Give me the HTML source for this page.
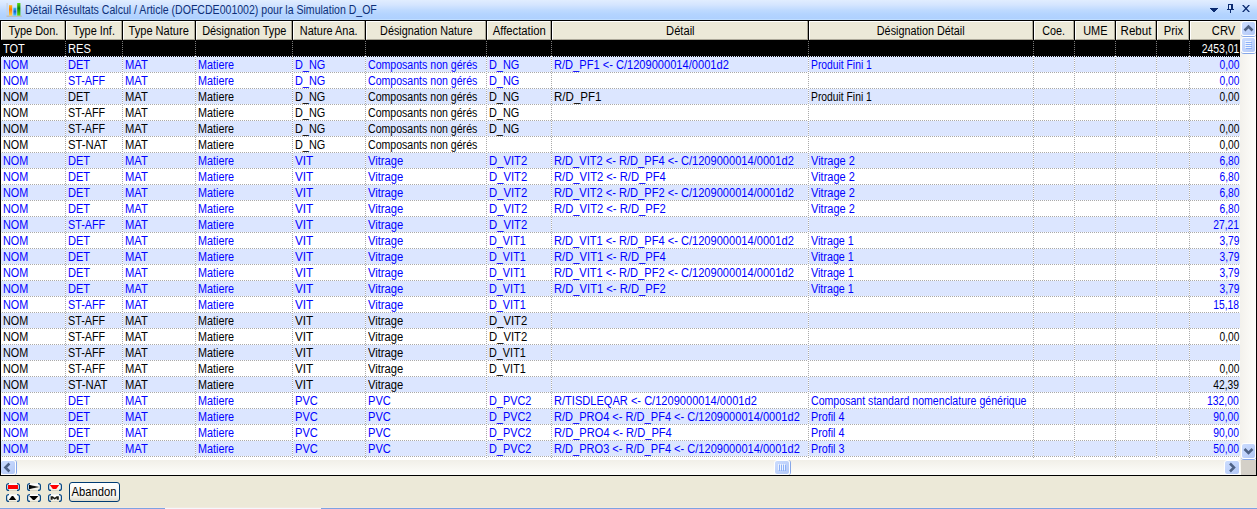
<!DOCTYPE html>
<html><head><meta charset="utf-8"><title>Détail Résultats Calcul</title>
<style>
html,body{margin:0;padding:0;}
body{width:1257px;height:509px;overflow:hidden;background:#ECE9D8;position:relative;font-family:"Liberation Sans",sans-serif;font-size:12px;}
#tb{position:absolute;left:0;top:0;width:1257px;height:20px;background:linear-gradient(#E1EDFF 0%,#D4E5FF 25%,#BFDAFF 50%,#B4D4FF 70%,#AED0FF 100%);}
#tt{position:absolute;left:25px;top:4px;color:#0D2F78;font-size:12px;line-height:13px;white-space:nowrap;transform-origin:0 0;}
#grid{position:absolute;left:0;top:20px;width:1257px;height:456px;background:#000;}
#gin{position:absolute;left:1px;top:1px;width:1255px;height:454px;background:#fff;overflow:hidden;}
.h{position:absolute;top:0;height:18px;background:#ECE9D8;border-top:1px solid #fff;border-left:1px solid #fff;border-bottom:1px solid #ACA899;box-sizing:border-box;text-align:center;line-height:19px;white-space:nowrap;color:#000;height:19px;overflow:hidden;}
.hs{position:absolute;top:0;width:1px;height:20px;background:#000;}
.hg{position:absolute;top:0;width:1px;height:19px;background:#ACA899;}
.r{position:absolute;left:0;width:1239px;height:15px;}
.r.t{background:#DCE6FF;}
.r.w0{background:#000;}
.c{position:absolute;top:1px;height:16px;line-height:15px;white-space:nowrap;overflow:hidden;padding-left:2px;box-sizing:border-box;}
.c.n{text-align:right;padding-left:0;padding-right:2px;}
.s{display:inline-block;white-space:pre;}
.b{color:#0000FF}.k{color:#000}.w{color:#fff}
.hl{position:absolute;left:0;width:1239px;height:1px;background-image:linear-gradient(90deg,#fff 50%,#A9A9A9 50%);background-size:2px 1px;}
.hl.k0{background-image:linear-gradient(90deg,#000 50%,#DCE6FF 50%);}
.vl{position:absolute;top:20px;width:1px;height:417px;background-image:linear-gradient(#A9A9A9 50%,#fff 50%);background-size:1px 2px;}
.vk{position:absolute;top:20px;width:1px;height:15px;background-image:linear-gradient(#7A7A7A 50%,#000 50%);background-size:1px 2px;}
</style></head><body>

<div id="tb">
<svg style="position:absolute;left:5px;top:2px" width="18" height="16" viewBox="0 0 18 16">
<defs>
<linearGradient id="go" x1="0" y1="0" x2="0" y2="1"><stop offset="0" stop-color="#FFB818"/><stop offset=".4" stop-color="#FF7E00"/><stop offset="1" stop-color="#FFD448"/></linearGradient>
<linearGradient id="gb" x1="0" y1="0" x2="0" y2="1"><stop offset="0" stop-color="#35C5F5"/><stop offset=".5" stop-color="#1560D0"/><stop offset="1" stop-color="#40D0FF"/></linearGradient>
<linearGradient id="gg" x1="0" y1="0" x2="0" y2="1"><stop offset="0" stop-color="#5CE010"/><stop offset=".42" stop-color="#0A860A"/><stop offset="1" stop-color="#62DA00"/></linearGradient>
</defs>
<rect x="1.5" y="1" width="1.2" height="13.5" fill="#CDD2DC"/>
<rect x="1.5" y="13.6" width="15.3" height="1.2" fill="#BDBAB4"/>
<rect x="4" y="3.2" width="3.2" height="10.4" fill="url(#go)"/>
<rect x="8.4" y="5.7" width="2.9" height="7.9" fill="url(#gb)"/>
<rect x="12.2" y="1" width="3.2" height="12.6" fill="url(#gg)"/>
</svg>
<div id="tt"><span class="s" style="transform:scaleX(0.8792);transform-origin:0 50%">Détail Résultats Calcul / Article (DOFCDE001002) pour la Simulation D_OF</span></div>
<svg style="position:absolute;left:1205px;top:0" width="52" height="20" viewBox="1205 0 52 20" shape-rendering="crispEdges" fill="#0B2B70">
<rect x="1210" y="8" width="8" height="1"/><rect x="1211" y="9" width="6" height="1"/><rect x="1212" y="10" width="4" height="1"/><rect x="1213" y="11" width="2" height="1"/>
<rect x="1228" y="4" width="5" height="1"/><rect x="1228" y="5" width="1" height="4"/><rect x="1231" y="5" width="2" height="4"/><rect x="1227" y="9" width="7" height="1"/><rect x="1230" y="10" width="1" height="3"/>
<rect x="1229" y="5" width="2" height="4" fill="#D6E4FA"/>
<path d="M1242 5 h1.7 l2.3 2.5 l2.3 -2.5 h1.7 l-3.1 3.5 l3.1 3.5 h-1.7 l-2.3 -2.5 l-2.3 2.5 h-1.7 l3.1 -3.5 Z" shape-rendering="auto"/>
</svg>
<div style="position:absolute;left:0;top:19px;width:1257px;height:1px;background:#BFDDFF"></div>
</div>
<div id="grid"><div id="gin">
<div class="h" style="left:0px;width:63px"><span class="s" style="transform:scaleX(0.9104);transform-origin:50% 50%">Type Don.</span></div>
<div class="hg" style="left:63px"></div><div class="hs" style="left:64px"></div>
<div class="h" style="left:65px;width:55px"><span class="s" style="transform:scaleX(0.9081);transform-origin:50% 50%">Type Inf.</span></div>
<div class="hg" style="left:120px"></div><div class="hs" style="left:121px"></div>
<div class="h" style="left:122px;width:71px"><span class="s" style="transform:scaleX(0.9224);transform-origin:50% 50%">Type Nature</span></div>
<div class="hg" style="left:193px"></div><div class="hs" style="left:194px"></div>
<div class="h" style="left:195px;width:95px"><span class="s" style="transform:scaleX(0.9101);transform-origin:50% 50%">Désignation Type</span></div>
<div class="hg" style="left:290px"></div><div class="hs" style="left:291px"></div>
<div class="h" style="left:292px;width:71px"><span class="s" style="transform:scaleX(0.9120);transform-origin:50% 50%">Nature Ana.</span></div>
<div class="hg" style="left:363px"></div><div class="hs" style="left:364px"></div>
<div class="h" style="left:365px;width:119px"><span class="s" style="transform:scaleX(0.9004);transform-origin:50% 50%">Désignation Nature</span></div>
<div class="hg" style="left:484px"></div><div class="hs" style="left:485px"></div>
<div class="h" style="left:486px;width:63px"><span class="s" style="transform:scaleX(0.9401);transform-origin:50% 50%">Affectation</span></div>
<div class="hg" style="left:549px"></div><div class="hs" style="left:550px"></div>
<div class="h" style="left:551px;width:255px"><span class="s" style="transform:scaleX(0.9287);transform-origin:50% 50%">Détail</span></div>
<div class="hg" style="left:806px"></div><div class="hs" style="left:807px"></div>
<div class="h" style="left:808px;width:223px"><span class="s" style="transform:scaleX(0.9015);transform-origin:50% 50%">Désignation Détail</span></div>
<div class="hg" style="left:1031px"></div><div class="hs" style="left:1032px"></div>
<div class="h" style="left:1033px;width:39px"><span class="s" style="transform:scaleX(0.8991);transform-origin:50% 50%">Coe.</span></div>
<div class="hg" style="left:1072px"></div><div class="hs" style="left:1073px"></div>
<div class="h" style="left:1074px;width:39px"><span class="s" style="transform:scaleX(0.9111);transform-origin:50% 50%">UME</span></div>
<div class="hg" style="left:1113px"></div><div class="hs" style="left:1114px"></div>
<div class="h" style="left:1115px;width:39px"><span class="s" style="transform:scaleX(0.9616);transform-origin:50% 50%">Rebut</span></div>
<div class="hg" style="left:1154px"></div><div class="hs" style="left:1155px"></div>
<div class="h" style="left:1156px;width:31px"><span class="s" style="transform:scaleX(0.9336);transform-origin:50% 50%">Prix</span></div>
<div class="hg" style="left:1187px"></div><div class="hs" style="left:1188px"></div>
<div class="h" style="left:1189px;width:66px"><span class="s" style="transform:scaleX(0.9313);transform-origin:50% 50%">CRV</span></div>
<div style="position:absolute;left:0;top:19px;width:1239px;height:1px;background:#000"></div>
<div class="r w0" style="top:20px">
<div class="c w" style="left:0px;width:64px"><span class="s" style="transform:scaleX(0.9167);transform-origin:0 50%">TOT</span></div>
<div class="c w" style="left:65px;width:56px"><span class="s" style="transform:scaleX(0.9235);transform-origin:0 50%">RES</span></div>
<div class="c n w" style="left:1189px;width:51px"><span class="s" style="transform:scaleX(0.8689);transform-origin:100% 50%">2453,01</span></div>
</div>
<div class="hl k0" style="top:35px"></div>
<div class="r t" style="top:36px">
<div class="c b" style="left:0px;width:64px"><span class="s" style="transform:scaleX(0.9000);transform-origin:0 50%">NOM</span></div>
<div class="c b" style="left:65px;width:56px"><span class="s" style="transform:scaleX(0.9208);transform-origin:0 50%">DET</span></div>
<div class="c b" style="left:122px;width:72px"><span class="s" style="transform:scaleX(0.9324);transform-origin:0 50%">MAT</span></div>
<div class="c b" style="left:195px;width:96px"><span class="s" style="transform:scaleX(0.8996);transform-origin:0 50%">Matiere</span></div>
<div class="c b" style="left:292px;width:72px"><span class="s" style="transform:scaleX(0.9087);transform-origin:0 50%">D_NG</span></div>
<div class="c b" style="left:365px;width:120px"><span class="s" style="transform:scaleX(0.8809);transform-origin:0 50%">Composants non gérés</span></div>
<div class="c b" style="left:486px;width:64px"><span class="s" style="transform:scaleX(0.9087);transform-origin:0 50%">D_NG</span></div>
<div class="c b" style="left:551px;width:256px"><span class="s" style="transform:scaleX(0.9242);transform-origin:0 50%">R/D_PF1 &lt;- C/1209000014/0001d2</span></div>
<div class="c b" style="left:808px;width:224px"><span class="s" style="transform:scaleX(0.8599);transform-origin:0 50%">Produit Fini 1</span></div>
<div class="c n b" style="left:1189px;width:51px"><span class="s" style="transform:scaleX(0.8519);transform-origin:100% 50%">0,00</span></div>
</div>
<div class="hl" style="top:51px"></div>
<div class="r" style="top:52px">
<div class="c b" style="left:0px;width:64px"><span class="s" style="transform:scaleX(0.9000);transform-origin:0 50%">NOM</span></div>
<div class="c b" style="left:65px;width:56px"><span class="s" style="transform:scaleX(0.8998);transform-origin:0 50%">ST-AFF</span></div>
<div class="c b" style="left:122px;width:72px"><span class="s" style="transform:scaleX(0.9324);transform-origin:0 50%">MAT</span></div>
<div class="c b" style="left:195px;width:96px"><span class="s" style="transform:scaleX(0.8996);transform-origin:0 50%">Matiere</span></div>
<div class="c b" style="left:292px;width:72px"><span class="s" style="transform:scaleX(0.9087);transform-origin:0 50%">D_NG</span></div>
<div class="c b" style="left:365px;width:120px"><span class="s" style="transform:scaleX(0.8809);transform-origin:0 50%">Composants non gérés</span></div>
<div class="c b" style="left:486px;width:64px"><span class="s" style="transform:scaleX(0.9087);transform-origin:0 50%">D_NG</span></div>
<div class="c n b" style="left:1189px;width:51px"><span class="s" style="transform:scaleX(0.8519);transform-origin:100% 50%">0,00</span></div>
</div>
<div class="hl" style="top:67px"></div>
<div class="r t" style="top:68px">
<div class="c k" style="left:0px;width:64px"><span class="s" style="transform:scaleX(0.9000);transform-origin:0 50%">NOM</span></div>
<div class="c k" style="left:65px;width:56px"><span class="s" style="transform:scaleX(0.9208);transform-origin:0 50%">DET</span></div>
<div class="c k" style="left:122px;width:72px"><span class="s" style="transform:scaleX(0.9324);transform-origin:0 50%">MAT</span></div>
<div class="c k" style="left:195px;width:96px"><span class="s" style="transform:scaleX(0.8996);transform-origin:0 50%">Matiere</span></div>
<div class="c k" style="left:292px;width:72px"><span class="s" style="transform:scaleX(0.9087);transform-origin:0 50%">D_NG</span></div>
<div class="c k" style="left:365px;width:120px"><span class="s" style="transform:scaleX(0.8809);transform-origin:0 50%">Composants non gérés</span></div>
<div class="c k" style="left:486px;width:64px"><span class="s" style="transform:scaleX(0.9087);transform-origin:0 50%">D_NG</span></div>
<div class="c k" style="left:551px;width:256px"><span class="s" style="transform:scaleX(0.9623);transform-origin:0 50%">R/D_PF1</span></div>
<div class="c k" style="left:808px;width:224px"><span class="s" style="transform:scaleX(0.8599);transform-origin:0 50%">Produit Fini 1</span></div>
<div class="c n k" style="left:1189px;width:51px"><span class="s" style="transform:scaleX(0.8519);transform-origin:100% 50%">0,00</span></div>
</div>
<div class="hl" style="top:83px"></div>
<div class="r" style="top:84px">
<div class="c k" style="left:0px;width:64px"><span class="s" style="transform:scaleX(0.9000);transform-origin:0 50%">NOM</span></div>
<div class="c k" style="left:65px;width:56px"><span class="s" style="transform:scaleX(0.8998);transform-origin:0 50%">ST-AFF</span></div>
<div class="c k" style="left:122px;width:72px"><span class="s" style="transform:scaleX(0.9324);transform-origin:0 50%">MAT</span></div>
<div class="c k" style="left:195px;width:96px"><span class="s" style="transform:scaleX(0.8996);transform-origin:0 50%">Matiere</span></div>
<div class="c k" style="left:292px;width:72px"><span class="s" style="transform:scaleX(0.9087);transform-origin:0 50%">D_NG</span></div>
<div class="c k" style="left:365px;width:120px"><span class="s" style="transform:scaleX(0.8809);transform-origin:0 50%">Composants non gérés</span></div>
<div class="c k" style="left:486px;width:64px"><span class="s" style="transform:scaleX(0.9087);transform-origin:0 50%">D_NG</span></div>
</div>
<div class="hl" style="top:99px"></div>
<div class="r t" style="top:100px">
<div class="c k" style="left:0px;width:64px"><span class="s" style="transform:scaleX(0.9000);transform-origin:0 50%">NOM</span></div>
<div class="c k" style="left:65px;width:56px"><span class="s" style="transform:scaleX(0.8998);transform-origin:0 50%">ST-AFF</span></div>
<div class="c k" style="left:122px;width:72px"><span class="s" style="transform:scaleX(0.9324);transform-origin:0 50%">MAT</span></div>
<div class="c k" style="left:195px;width:96px"><span class="s" style="transform:scaleX(0.8996);transform-origin:0 50%">Matiere</span></div>
<div class="c k" style="left:292px;width:72px"><span class="s" style="transform:scaleX(0.9087);transform-origin:0 50%">D_NG</span></div>
<div class="c k" style="left:365px;width:120px"><span class="s" style="transform:scaleX(0.8809);transform-origin:0 50%">Composants non gérés</span></div>
<div class="c k" style="left:486px;width:64px"><span class="s" style="transform:scaleX(0.9087);transform-origin:0 50%">D_NG</span></div>
<div class="c n k" style="left:1189px;width:51px"><span class="s" style="transform:scaleX(0.8519);transform-origin:100% 50%">0,00</span></div>
</div>
<div class="hl" style="top:115px"></div>
<div class="r" style="top:116px">
<div class="c k" style="left:0px;width:64px"><span class="s" style="transform:scaleX(0.9000);transform-origin:0 50%">NOM</span></div>
<div class="c k" style="left:65px;width:56px"><span class="s" style="transform:scaleX(0.9430);transform-origin:0 50%">ST-NAT</span></div>
<div class="c k" style="left:122px;width:72px"><span class="s" style="transform:scaleX(0.9324);transform-origin:0 50%">MAT</span></div>
<div class="c k" style="left:195px;width:96px"><span class="s" style="transform:scaleX(0.8996);transform-origin:0 50%">Matiere</span></div>
<div class="c k" style="left:292px;width:72px"><span class="s" style="transform:scaleX(0.9087);transform-origin:0 50%">D_NG</span></div>
<div class="c k" style="left:365px;width:120px"><span class="s" style="transform:scaleX(0.8809);transform-origin:0 50%">Composants non gérés</span></div>
<div class="c n k" style="left:1189px;width:51px"><span class="s" style="transform:scaleX(0.8519);transform-origin:100% 50%">0,00</span></div>
</div>
<div class="hl" style="top:131px"></div>
<div class="r t" style="top:132px">
<div class="c b" style="left:0px;width:64px"><span class="s" style="transform:scaleX(0.9000);transform-origin:0 50%">NOM</span></div>
<div class="c b" style="left:65px;width:56px"><span class="s" style="transform:scaleX(0.9208);transform-origin:0 50%">DET</span></div>
<div class="c b" style="left:122px;width:72px"><span class="s" style="transform:scaleX(0.9324);transform-origin:0 50%">MAT</span></div>
<div class="c b" style="left:195px;width:96px"><span class="s" style="transform:scaleX(0.8996);transform-origin:0 50%">Matiere</span></div>
<div class="c b" style="left:292px;width:72px"><span class="s" style="transform:scaleX(0.9801);transform-origin:0 50%">VIT</span></div>
<div class="c b" style="left:365px;width:120px"><span class="s" style="transform:scaleX(0.9336);transform-origin:0 50%">Vitrage</span></div>
<div class="c b" style="left:486px;width:64px"><span class="s" style="transform:scaleX(0.9413);transform-origin:0 50%">D_VIT2</span></div>
<div class="c b" style="left:551px;width:256px"><span class="s" style="transform:scaleX(0.9241);transform-origin:0 50%">R/D_VIT2 &lt;- R/D_PF4 &lt;- C/1209000014/0001d2</span></div>
<div class="c b" style="left:808px;width:224px"><span class="s" style="transform:scaleX(0.9161);transform-origin:0 50%">Vitrage 2</span></div>
<div class="c n b" style="left:1189px;width:51px"><span class="s" style="transform:scaleX(0.8519);transform-origin:100% 50%">6,80</span></div>
</div>
<div class="hl" style="top:147px"></div>
<div class="r" style="top:148px">
<div class="c b" style="left:0px;width:64px"><span class="s" style="transform:scaleX(0.9000);transform-origin:0 50%">NOM</span></div>
<div class="c b" style="left:65px;width:56px"><span class="s" style="transform:scaleX(0.9208);transform-origin:0 50%">DET</span></div>
<div class="c b" style="left:122px;width:72px"><span class="s" style="transform:scaleX(0.9324);transform-origin:0 50%">MAT</span></div>
<div class="c b" style="left:195px;width:96px"><span class="s" style="transform:scaleX(0.8996);transform-origin:0 50%">Matiere</span></div>
<div class="c b" style="left:292px;width:72px"><span class="s" style="transform:scaleX(0.9801);transform-origin:0 50%">VIT</span></div>
<div class="c b" style="left:365px;width:120px"><span class="s" style="transform:scaleX(0.9336);transform-origin:0 50%">Vitrage</span></div>
<div class="c b" style="left:486px;width:64px"><span class="s" style="transform:scaleX(0.9413);transform-origin:0 50%">D_VIT2</span></div>
<div class="c b" style="left:551px;width:256px"><span class="s" style="transform:scaleX(0.9340);transform-origin:0 50%">R/D_VIT2 &lt;- R/D_PF4</span></div>
<div class="c b" style="left:808px;width:224px"><span class="s" style="transform:scaleX(0.9161);transform-origin:0 50%">Vitrage 2</span></div>
<div class="c n b" style="left:1189px;width:51px"><span class="s" style="transform:scaleX(0.8519);transform-origin:100% 50%">6,80</span></div>
</div>
<div class="hl" style="top:163px"></div>
<div class="r t" style="top:164px">
<div class="c b" style="left:0px;width:64px"><span class="s" style="transform:scaleX(0.9000);transform-origin:0 50%">NOM</span></div>
<div class="c b" style="left:65px;width:56px"><span class="s" style="transform:scaleX(0.9208);transform-origin:0 50%">DET</span></div>
<div class="c b" style="left:122px;width:72px"><span class="s" style="transform:scaleX(0.9324);transform-origin:0 50%">MAT</span></div>
<div class="c b" style="left:195px;width:96px"><span class="s" style="transform:scaleX(0.8996);transform-origin:0 50%">Matiere</span></div>
<div class="c b" style="left:292px;width:72px"><span class="s" style="transform:scaleX(0.9801);transform-origin:0 50%">VIT</span></div>
<div class="c b" style="left:365px;width:120px"><span class="s" style="transform:scaleX(0.9336);transform-origin:0 50%">Vitrage</span></div>
<div class="c b" style="left:486px;width:64px"><span class="s" style="transform:scaleX(0.9413);transform-origin:0 50%">D_VIT2</span></div>
<div class="c b" style="left:551px;width:256px"><span class="s" style="transform:scaleX(0.9241);transform-origin:0 50%">R/D_VIT2 &lt;- R/D_PF2 &lt;- C/1209000014/0001d2</span></div>
<div class="c b" style="left:808px;width:224px"><span class="s" style="transform:scaleX(0.9161);transform-origin:0 50%">Vitrage 2</span></div>
<div class="c n b" style="left:1189px;width:51px"><span class="s" style="transform:scaleX(0.8519);transform-origin:100% 50%">6,80</span></div>
</div>
<div class="hl" style="top:179px"></div>
<div class="r" style="top:180px">
<div class="c b" style="left:0px;width:64px"><span class="s" style="transform:scaleX(0.9000);transform-origin:0 50%">NOM</span></div>
<div class="c b" style="left:65px;width:56px"><span class="s" style="transform:scaleX(0.9208);transform-origin:0 50%">DET</span></div>
<div class="c b" style="left:122px;width:72px"><span class="s" style="transform:scaleX(0.9324);transform-origin:0 50%">MAT</span></div>
<div class="c b" style="left:195px;width:96px"><span class="s" style="transform:scaleX(0.8996);transform-origin:0 50%">Matiere</span></div>
<div class="c b" style="left:292px;width:72px"><span class="s" style="transform:scaleX(0.9801);transform-origin:0 50%">VIT</span></div>
<div class="c b" style="left:365px;width:120px"><span class="s" style="transform:scaleX(0.9336);transform-origin:0 50%">Vitrage</span></div>
<div class="c b" style="left:486px;width:64px"><span class="s" style="transform:scaleX(0.9413);transform-origin:0 50%">D_VIT2</span></div>
<div class="c b" style="left:551px;width:256px"><span class="s" style="transform:scaleX(0.9340);transform-origin:0 50%">R/D_VIT2 &lt;- R/D_PF2</span></div>
<div class="c b" style="left:808px;width:224px"><span class="s" style="transform:scaleX(0.9161);transform-origin:0 50%">Vitrage 2</span></div>
<div class="c n b" style="left:1189px;width:51px"><span class="s" style="transform:scaleX(0.8519);transform-origin:100% 50%">6,80</span></div>
</div>
<div class="hl" style="top:195px"></div>
<div class="r t" style="top:196px">
<div class="c b" style="left:0px;width:64px"><span class="s" style="transform:scaleX(0.9000);transform-origin:0 50%">NOM</span></div>
<div class="c b" style="left:65px;width:56px"><span class="s" style="transform:scaleX(0.8998);transform-origin:0 50%">ST-AFF</span></div>
<div class="c b" style="left:122px;width:72px"><span class="s" style="transform:scaleX(0.9324);transform-origin:0 50%">MAT</span></div>
<div class="c b" style="left:195px;width:96px"><span class="s" style="transform:scaleX(0.8996);transform-origin:0 50%">Matiere</span></div>
<div class="c b" style="left:292px;width:72px"><span class="s" style="transform:scaleX(0.9801);transform-origin:0 50%">VIT</span></div>
<div class="c b" style="left:365px;width:120px"><span class="s" style="transform:scaleX(0.9336);transform-origin:0 50%">Vitrage</span></div>
<div class="c b" style="left:486px;width:64px"><span class="s" style="transform:scaleX(0.9413);transform-origin:0 50%">D_VIT2</span></div>
<div class="c n b" style="left:1189px;width:51px"><span class="s" style="transform:scaleX(0.8591);transform-origin:100% 50%">27,21</span></div>
</div>
<div class="hl" style="top:211px"></div>
<div class="r" style="top:212px">
<div class="c b" style="left:0px;width:64px"><span class="s" style="transform:scaleX(0.9000);transform-origin:0 50%">NOM</span></div>
<div class="c b" style="left:65px;width:56px"><span class="s" style="transform:scaleX(0.9208);transform-origin:0 50%">DET</span></div>
<div class="c b" style="left:122px;width:72px"><span class="s" style="transform:scaleX(0.9324);transform-origin:0 50%">MAT</span></div>
<div class="c b" style="left:195px;width:96px"><span class="s" style="transform:scaleX(0.8996);transform-origin:0 50%">Matiere</span></div>
<div class="c b" style="left:292px;width:72px"><span class="s" style="transform:scaleX(0.9801);transform-origin:0 50%">VIT</span></div>
<div class="c b" style="left:365px;width:120px"><span class="s" style="transform:scaleX(0.9336);transform-origin:0 50%">Vitrage</span></div>
<div class="c b" style="left:486px;width:64px"><span class="s" style="transform:scaleX(0.9045);transform-origin:0 50%">D_VIT1</span></div>
<div class="c b" style="left:551px;width:256px"><span class="s" style="transform:scaleX(0.9241);transform-origin:0 50%">R/D_VIT1 &lt;- R/D_PF4 &lt;- C/1209000014/0001d2</span></div>
<div class="c b" style="left:808px;width:224px"><span class="s" style="transform:scaleX(0.8952);transform-origin:0 50%">Vitrage 1</span></div>
<div class="c n b" style="left:1189px;width:51px"><span class="s" style="transform:scaleX(0.8519);transform-origin:100% 50%">3,79</span></div>
</div>
<div class="hl" style="top:227px"></div>
<div class="r t" style="top:228px">
<div class="c b" style="left:0px;width:64px"><span class="s" style="transform:scaleX(0.9000);transform-origin:0 50%">NOM</span></div>
<div class="c b" style="left:65px;width:56px"><span class="s" style="transform:scaleX(0.9208);transform-origin:0 50%">DET</span></div>
<div class="c b" style="left:122px;width:72px"><span class="s" style="transform:scaleX(0.9324);transform-origin:0 50%">MAT</span></div>
<div class="c b" style="left:195px;width:96px"><span class="s" style="transform:scaleX(0.8996);transform-origin:0 50%">Matiere</span></div>
<div class="c b" style="left:292px;width:72px"><span class="s" style="transform:scaleX(0.9801);transform-origin:0 50%">VIT</span></div>
<div class="c b" style="left:365px;width:120px"><span class="s" style="transform:scaleX(0.9336);transform-origin:0 50%">Vitrage</span></div>
<div class="c b" style="left:486px;width:64px"><span class="s" style="transform:scaleX(0.9045);transform-origin:0 50%">D_VIT1</span></div>
<div class="c b" style="left:551px;width:256px"><span class="s" style="transform:scaleX(0.9340);transform-origin:0 50%">R/D_VIT1 &lt;- R/D_PF4</span></div>
<div class="c b" style="left:808px;width:224px"><span class="s" style="transform:scaleX(0.8952);transform-origin:0 50%">Vitrage 1</span></div>
<div class="c n b" style="left:1189px;width:51px"><span class="s" style="transform:scaleX(0.8519);transform-origin:100% 50%">3,79</span></div>
</div>
<div class="hl" style="top:243px"></div>
<div class="r" style="top:244px">
<div class="c b" style="left:0px;width:64px"><span class="s" style="transform:scaleX(0.9000);transform-origin:0 50%">NOM</span></div>
<div class="c b" style="left:65px;width:56px"><span class="s" style="transform:scaleX(0.9208);transform-origin:0 50%">DET</span></div>
<div class="c b" style="left:122px;width:72px"><span class="s" style="transform:scaleX(0.9324);transform-origin:0 50%">MAT</span></div>
<div class="c b" style="left:195px;width:96px"><span class="s" style="transform:scaleX(0.8996);transform-origin:0 50%">Matiere</span></div>
<div class="c b" style="left:292px;width:72px"><span class="s" style="transform:scaleX(0.9801);transform-origin:0 50%">VIT</span></div>
<div class="c b" style="left:365px;width:120px"><span class="s" style="transform:scaleX(0.9336);transform-origin:0 50%">Vitrage</span></div>
<div class="c b" style="left:486px;width:64px"><span class="s" style="transform:scaleX(0.9045);transform-origin:0 50%">D_VIT1</span></div>
<div class="c b" style="left:551px;width:256px"><span class="s" style="transform:scaleX(0.9241);transform-origin:0 50%">R/D_VIT1 &lt;- R/D_PF2 &lt;- C/1209000014/0001d2</span></div>
<div class="c b" style="left:808px;width:224px"><span class="s" style="transform:scaleX(0.8952);transform-origin:0 50%">Vitrage 1</span></div>
<div class="c n b" style="left:1189px;width:51px"><span class="s" style="transform:scaleX(0.8519);transform-origin:100% 50%">3,79</span></div>
</div>
<div class="hl" style="top:259px"></div>
<div class="r t" style="top:260px">
<div class="c b" style="left:0px;width:64px"><span class="s" style="transform:scaleX(0.9000);transform-origin:0 50%">NOM</span></div>
<div class="c b" style="left:65px;width:56px"><span class="s" style="transform:scaleX(0.9208);transform-origin:0 50%">DET</span></div>
<div class="c b" style="left:122px;width:72px"><span class="s" style="transform:scaleX(0.9324);transform-origin:0 50%">MAT</span></div>
<div class="c b" style="left:195px;width:96px"><span class="s" style="transform:scaleX(0.8996);transform-origin:0 50%">Matiere</span></div>
<div class="c b" style="left:292px;width:72px"><span class="s" style="transform:scaleX(0.9801);transform-origin:0 50%">VIT</span></div>
<div class="c b" style="left:365px;width:120px"><span class="s" style="transform:scaleX(0.9336);transform-origin:0 50%">Vitrage</span></div>
<div class="c b" style="left:486px;width:64px"><span class="s" style="transform:scaleX(0.9045);transform-origin:0 50%">D_VIT1</span></div>
<div class="c b" style="left:551px;width:256px"><span class="s" style="transform:scaleX(0.9340);transform-origin:0 50%">R/D_VIT1 &lt;- R/D_PF2</span></div>
<div class="c b" style="left:808px;width:224px"><span class="s" style="transform:scaleX(0.8952);transform-origin:0 50%">Vitrage 1</span></div>
<div class="c n b" style="left:1189px;width:51px"><span class="s" style="transform:scaleX(0.8519);transform-origin:100% 50%">3,79</span></div>
</div>
<div class="hl" style="top:275px"></div>
<div class="r" style="top:276px">
<div class="c b" style="left:0px;width:64px"><span class="s" style="transform:scaleX(0.9000);transform-origin:0 50%">NOM</span></div>
<div class="c b" style="left:65px;width:56px"><span class="s" style="transform:scaleX(0.8998);transform-origin:0 50%">ST-AFF</span></div>
<div class="c b" style="left:122px;width:72px"><span class="s" style="transform:scaleX(0.9324);transform-origin:0 50%">MAT</span></div>
<div class="c b" style="left:195px;width:96px"><span class="s" style="transform:scaleX(0.8996);transform-origin:0 50%">Matiere</span></div>
<div class="c b" style="left:292px;width:72px"><span class="s" style="transform:scaleX(0.9801);transform-origin:0 50%">VIT</span></div>
<div class="c b" style="left:365px;width:120px"><span class="s" style="transform:scaleX(0.9336);transform-origin:0 50%">Vitrage</span></div>
<div class="c b" style="left:486px;width:64px"><span class="s" style="transform:scaleX(0.9045);transform-origin:0 50%">D_VIT1</span></div>
<div class="c n b" style="left:1189px;width:51px"><span class="s" style="transform:scaleX(0.8591);transform-origin:100% 50%">15,18</span></div>
</div>
<div class="hl" style="top:291px"></div>
<div class="r t" style="top:292px">
<div class="c k" style="left:0px;width:64px"><span class="s" style="transform:scaleX(0.9000);transform-origin:0 50%">NOM</span></div>
<div class="c k" style="left:65px;width:56px"><span class="s" style="transform:scaleX(0.8998);transform-origin:0 50%">ST-AFF</span></div>
<div class="c k" style="left:122px;width:72px"><span class="s" style="transform:scaleX(0.9324);transform-origin:0 50%">MAT</span></div>
<div class="c k" style="left:195px;width:96px"><span class="s" style="transform:scaleX(0.8996);transform-origin:0 50%">Matiere</span></div>
<div class="c k" style="left:292px;width:72px"><span class="s" style="transform:scaleX(0.9801);transform-origin:0 50%">VIT</span></div>
<div class="c k" style="left:365px;width:120px"><span class="s" style="transform:scaleX(0.9336);transform-origin:0 50%">Vitrage</span></div>
<div class="c k" style="left:486px;width:64px"><span class="s" style="transform:scaleX(0.9413);transform-origin:0 50%">D_VIT2</span></div>
</div>
<div class="hl" style="top:307px"></div>
<div class="r" style="top:308px">
<div class="c k" style="left:0px;width:64px"><span class="s" style="transform:scaleX(0.9000);transform-origin:0 50%">NOM</span></div>
<div class="c k" style="left:65px;width:56px"><span class="s" style="transform:scaleX(0.8998);transform-origin:0 50%">ST-AFF</span></div>
<div class="c k" style="left:122px;width:72px"><span class="s" style="transform:scaleX(0.9324);transform-origin:0 50%">MAT</span></div>
<div class="c k" style="left:195px;width:96px"><span class="s" style="transform:scaleX(0.8996);transform-origin:0 50%">Matiere</span></div>
<div class="c k" style="left:292px;width:72px"><span class="s" style="transform:scaleX(0.9801);transform-origin:0 50%">VIT</span></div>
<div class="c k" style="left:365px;width:120px"><span class="s" style="transform:scaleX(0.9336);transform-origin:0 50%">Vitrage</span></div>
<div class="c k" style="left:486px;width:64px"><span class="s" style="transform:scaleX(0.9413);transform-origin:0 50%">D_VIT2</span></div>
<div class="c n k" style="left:1189px;width:51px"><span class="s" style="transform:scaleX(0.8519);transform-origin:100% 50%">0,00</span></div>
</div>
<div class="hl" style="top:323px"></div>
<div class="r t" style="top:324px">
<div class="c k" style="left:0px;width:64px"><span class="s" style="transform:scaleX(0.9000);transform-origin:0 50%">NOM</span></div>
<div class="c k" style="left:65px;width:56px"><span class="s" style="transform:scaleX(0.8998);transform-origin:0 50%">ST-AFF</span></div>
<div class="c k" style="left:122px;width:72px"><span class="s" style="transform:scaleX(0.9324);transform-origin:0 50%">MAT</span></div>
<div class="c k" style="left:195px;width:96px"><span class="s" style="transform:scaleX(0.8996);transform-origin:0 50%">Matiere</span></div>
<div class="c k" style="left:292px;width:72px"><span class="s" style="transform:scaleX(0.9801);transform-origin:0 50%">VIT</span></div>
<div class="c k" style="left:365px;width:120px"><span class="s" style="transform:scaleX(0.9336);transform-origin:0 50%">Vitrage</span></div>
<div class="c k" style="left:486px;width:64px"><span class="s" style="transform:scaleX(0.9045);transform-origin:0 50%">D_VIT1</span></div>
</div>
<div class="hl" style="top:339px"></div>
<div class="r" style="top:340px">
<div class="c k" style="left:0px;width:64px"><span class="s" style="transform:scaleX(0.9000);transform-origin:0 50%">NOM</span></div>
<div class="c k" style="left:65px;width:56px"><span class="s" style="transform:scaleX(0.8998);transform-origin:0 50%">ST-AFF</span></div>
<div class="c k" style="left:122px;width:72px"><span class="s" style="transform:scaleX(0.9324);transform-origin:0 50%">MAT</span></div>
<div class="c k" style="left:195px;width:96px"><span class="s" style="transform:scaleX(0.8996);transform-origin:0 50%">Matiere</span></div>
<div class="c k" style="left:292px;width:72px"><span class="s" style="transform:scaleX(0.9801);transform-origin:0 50%">VIT</span></div>
<div class="c k" style="left:365px;width:120px"><span class="s" style="transform:scaleX(0.9336);transform-origin:0 50%">Vitrage</span></div>
<div class="c k" style="left:486px;width:64px"><span class="s" style="transform:scaleX(0.9045);transform-origin:0 50%">D_VIT1</span></div>
<div class="c n k" style="left:1189px;width:51px"><span class="s" style="transform:scaleX(0.8519);transform-origin:100% 50%">0,00</span></div>
</div>
<div class="hl" style="top:355px"></div>
<div class="r t" style="top:356px">
<div class="c k" style="left:0px;width:64px"><span class="s" style="transform:scaleX(0.9000);transform-origin:0 50%">NOM</span></div>
<div class="c k" style="left:65px;width:56px"><span class="s" style="transform:scaleX(0.9430);transform-origin:0 50%">ST-NAT</span></div>
<div class="c k" style="left:122px;width:72px"><span class="s" style="transform:scaleX(0.9324);transform-origin:0 50%">MAT</span></div>
<div class="c k" style="left:195px;width:96px"><span class="s" style="transform:scaleX(0.8996);transform-origin:0 50%">Matiere</span></div>
<div class="c k" style="left:292px;width:72px"><span class="s" style="transform:scaleX(0.9801);transform-origin:0 50%">VIT</span></div>
<div class="c k" style="left:365px;width:120px"><span class="s" style="transform:scaleX(0.9336);transform-origin:0 50%">Vitrage</span></div>
<div class="c n k" style="left:1189px;width:51px"><span class="s" style="transform:scaleX(0.8591);transform-origin:100% 50%">42,39</span></div>
</div>
<div class="hl" style="top:371px"></div>
<div class="r" style="top:372px">
<div class="c b" style="left:0px;width:64px"><span class="s" style="transform:scaleX(0.9000);transform-origin:0 50%">NOM</span></div>
<div class="c b" style="left:65px;width:56px"><span class="s" style="transform:scaleX(0.9208);transform-origin:0 50%">DET</span></div>
<div class="c b" style="left:122px;width:72px"><span class="s" style="transform:scaleX(0.9324);transform-origin:0 50%">MAT</span></div>
<div class="c b" style="left:195px;width:96px"><span class="s" style="transform:scaleX(0.8996);transform-origin:0 50%">Matiere</span></div>
<div class="c b" style="left:292px;width:72px"><span class="s" style="transform:scaleX(0.9235);transform-origin:0 50%">PVC</span></div>
<div class="c b" style="left:365px;width:120px"><span class="s" style="transform:scaleX(0.9235);transform-origin:0 50%">PVC</span></div>
<div class="c b" style="left:486px;width:64px"><span class="s" style="transform:scaleX(0.9060);transform-origin:0 50%">D_PVC2</span></div>
<div class="c b" style="left:551px;width:256px"><span class="s" style="transform:scaleX(0.9226);transform-origin:0 50%">R/TISDLEQAR &lt;- C/1209000014/0001d2</span></div>
<div class="c b" style="left:808px;width:224px"><span class="s" style="transform:scaleX(0.8826);transform-origin:0 50%">Composant standard nomenclature générique</span></div>
<div class="c n b" style="left:1189px;width:51px"><span class="s" style="transform:scaleX(0.8664);transform-origin:100% 50%">132,00</span></div>
</div>
<div class="hl" style="top:387px"></div>
<div class="r t" style="top:388px">
<div class="c b" style="left:0px;width:64px"><span class="s" style="transform:scaleX(0.9000);transform-origin:0 50%">NOM</span></div>
<div class="c b" style="left:65px;width:56px"><span class="s" style="transform:scaleX(0.9208);transform-origin:0 50%">DET</span></div>
<div class="c b" style="left:122px;width:72px"><span class="s" style="transform:scaleX(0.9324);transform-origin:0 50%">MAT</span></div>
<div class="c b" style="left:195px;width:96px"><span class="s" style="transform:scaleX(0.8996);transform-origin:0 50%">Matiere</span></div>
<div class="c b" style="left:292px;width:72px"><span class="s" style="transform:scaleX(0.9235);transform-origin:0 50%">PVC</span></div>
<div class="c b" style="left:365px;width:120px"><span class="s" style="transform:scaleX(0.9235);transform-origin:0 50%">PVC</span></div>
<div class="c b" style="left:486px;width:64px"><span class="s" style="transform:scaleX(0.9060);transform-origin:0 50%">D_PVC2</span></div>
<div class="c b" style="left:551px;width:256px"><span class="s" style="transform:scaleX(0.9212);transform-origin:0 50%">R/D_PRO4 &lt;- R/D_PF4 &lt;- C/1209000014/0001d2</span></div>
<div class="c b" style="left:808px;width:224px"><span class="s" style="transform:scaleX(0.8940);transform-origin:0 50%">Profil 4</span></div>
<div class="c n b" style="left:1189px;width:51px"><span class="s" style="transform:scaleX(0.8591);transform-origin:100% 50%">90,00</span></div>
</div>
<div class="hl" style="top:403px"></div>
<div class="r" style="top:404px">
<div class="c b" style="left:0px;width:64px"><span class="s" style="transform:scaleX(0.9000);transform-origin:0 50%">NOM</span></div>
<div class="c b" style="left:65px;width:56px"><span class="s" style="transform:scaleX(0.9208);transform-origin:0 50%">DET</span></div>
<div class="c b" style="left:122px;width:72px"><span class="s" style="transform:scaleX(0.9324);transform-origin:0 50%">MAT</span></div>
<div class="c b" style="left:195px;width:96px"><span class="s" style="transform:scaleX(0.8996);transform-origin:0 50%">Matiere</span></div>
<div class="c b" style="left:292px;width:72px"><span class="s" style="transform:scaleX(0.9235);transform-origin:0 50%">PVC</span></div>
<div class="c b" style="left:365px;width:120px"><span class="s" style="transform:scaleX(0.9235);transform-origin:0 50%">PVC</span></div>
<div class="c b" style="left:486px;width:64px"><span class="s" style="transform:scaleX(0.9060);transform-origin:0 50%">D_PVC2</span></div>
<div class="c b" style="left:551px;width:256px"><span class="s" style="transform:scaleX(0.9272);transform-origin:0 50%">R/D_PRO4 &lt;- R/D_PF4</span></div>
<div class="c b" style="left:808px;width:224px"><span class="s" style="transform:scaleX(0.8940);transform-origin:0 50%">Profil 4</span></div>
<div class="c n b" style="left:1189px;width:51px"><span class="s" style="transform:scaleX(0.8591);transform-origin:100% 50%">90,00</span></div>
</div>
<div class="hl" style="top:419px"></div>
<div class="r t" style="top:420px">
<div class="c b" style="left:0px;width:64px"><span class="s" style="transform:scaleX(0.9000);transform-origin:0 50%">NOM</span></div>
<div class="c b" style="left:65px;width:56px"><span class="s" style="transform:scaleX(0.9208);transform-origin:0 50%">DET</span></div>
<div class="c b" style="left:122px;width:72px"><span class="s" style="transform:scaleX(0.9324);transform-origin:0 50%">MAT</span></div>
<div class="c b" style="left:195px;width:96px"><span class="s" style="transform:scaleX(0.8996);transform-origin:0 50%">Matiere</span></div>
<div class="c b" style="left:292px;width:72px"><span class="s" style="transform:scaleX(0.9235);transform-origin:0 50%">PVC</span></div>
<div class="c b" style="left:365px;width:120px"><span class="s" style="transform:scaleX(0.9235);transform-origin:0 50%">PVC</span></div>
<div class="c b" style="left:486px;width:64px"><span class="s" style="transform:scaleX(0.9060);transform-origin:0 50%">D_PVC2</span></div>
<div class="c b" style="left:551px;width:256px"><span class="s" style="transform:scaleX(0.9212);transform-origin:0 50%">R/D_PRO3 &lt;- R/D_PF4 &lt;- C/1209000014/0001d2</span></div>
<div class="c b" style="left:808px;width:224px"><span class="s" style="transform:scaleX(0.8940);transform-origin:0 50%">Profil 3</span></div>
<div class="c n b" style="left:1189px;width:51px"><span class="s" style="transform:scaleX(0.8591);transform-origin:100% 50%">50,00</span></div>
</div>
<div class="hl" style="top:435px"></div>
<div class="vl" style="left:64px"></div><div class="vk" style="left:64px"></div>
<div class="vl" style="left:121px"></div><div class="vk" style="left:121px"></div>
<div class="vl" style="left:194px"></div><div class="vk" style="left:194px"></div>
<div class="vl" style="left:291px"></div><div class="vk" style="left:291px"></div>
<div class="vl" style="left:364px"></div><div class="vk" style="left:364px"></div>
<div class="vl" style="left:485px"></div><div class="vk" style="left:485px"></div>
<div class="vl" style="left:550px"></div><div class="vk" style="left:550px"></div>
<div class="vl" style="left:807px"></div><div class="vk" style="left:807px"></div>
<div class="vl" style="left:1032px"></div><div class="vk" style="left:1032px"></div>
<div class="vl" style="left:1073px"></div><div class="vk" style="left:1073px"></div>
<div class="vl" style="left:1114px"></div><div class="vk" style="left:1114px"></div>
<div class="vl" style="left:1155px"></div><div class="vk" style="left:1155px"></div>
<div class="vl" style="left:1188px"></div><div class="vk" style="left:1188px"></div>
<div style="position:absolute;left:1239px;top:0;width:16px;height:439px;background:linear-gradient(90deg,#F3F1EC,#FEFEFB)"></div>
<div style="position:absolute;left:1240px;top:439px;width:15px;height:15px;background:#D4D0C8"></div>
<div style="position:absolute;left:0;top:439px;width:1240px;height:15px;background:linear-gradient(#F1EFE8,#FEFEFB)"></div>

<div style="position:absolute;left:1240px;top:13px;width:15px;height:3px;border-bottom:1px solid #86A7E8;border-radius:0 0 3px 3px;box-sizing:border-box"></div><div style="position:absolute;left:1240px;top:0px;width:15px;height:15px;box-sizing:border-box;border:1px solid #fff;border-radius:3px;background:linear-gradient(135deg,#CBDCFE 0%,#C0D3FB 50%,#B2C7F5 100%);"><svg width="13" height="13" viewBox="0 0 13 13" style="position:absolute;left:0;top:0"><path d="M2.5 8.5 L6.5 4.5 L10.5 8.5" fill="none" stroke="#4D6185" stroke-width="2.5" stroke-linejoin="miter"/></svg></div>
<div style="position:absolute;left:1240px;top:30px;width:15px;height:3px;border-bottom:1px solid #86A7E8;border-radius:0 0 3px 3px;box-sizing:border-box"></div><div style="position:absolute;left:1240px;top:16px;width:15px;height:16px;box-sizing:border-box;border:1px solid #fff;border-radius:3px;background:linear-gradient(135deg,#CBDCFE 0%,#C0D3FB 50%,#B2C7F5 100%);"><svg width="13" height="14" viewBox="0 0 13 14" style="position:absolute;left:0;top:0"><rect x="3" y="3" width="6" height="1" fill="#EEF4FE"/><rect x="4" y="4" width="6" height="1" fill="#8CB0F8"/><rect x="3" y="5" width="6" height="1" fill="#EEF4FE"/><rect x="4" y="6" width="6" height="1" fill="#8CB0F8"/><rect x="3" y="7" width="6" height="1" fill="#EEF4FE"/><rect x="4" y="8" width="6" height="1" fill="#8CB0F8"/><rect x="3" y="9" width="6" height="1" fill="#EEF4FE"/><rect x="4" y="10" width="6" height="1" fill="#8CB0F8"/></svg></div>
<div style="position:absolute;left:1240px;top:436px;width:15px;height:3px;border-bottom:1px solid #86A7E8;border-radius:0 0 3px 3px;box-sizing:border-box"></div><div style="position:absolute;left:1240px;top:422px;width:15px;height:16px;box-sizing:border-box;border:1px solid #fff;border-radius:3px;background:linear-gradient(135deg,#CBDCFE 0%,#C0D3FB 50%,#B2C7F5 100%);"><svg width="13" height="14" viewBox="0 0 13 14" style="position:absolute;left:0;top:0"><path d="M2.5 5 L6.5 9 L10.5 5" fill="none" stroke="#4D6185" stroke-width="2.5" stroke-linejoin="miter"/></svg></div>
<div style="position:absolute;left:13px;top:439px;width:3px;height:15px;border-right:1px solid #86A7E8;border-radius:0 3px 3px 0;box-sizing:border-box"></div><div style="position:absolute;left:-1px;top:439px;width:16px;height:15px;box-sizing:border-box;border:1px solid #fff;border-radius:3px;background:linear-gradient(135deg,#CBDCFE 0%,#C0D3FB 50%,#B2C7F5 100%);"><svg width="14" height="13" viewBox="0 0 14 13" style="position:absolute;left:0;top:0"><path d="M8.4 2.5 L4.4 6.5 L8.4 10.5" fill="none" stroke="#4D6185" stroke-width="2.5" stroke-linejoin="miter"/></svg></div>
<div style="position:absolute;left:1223px;top:439px;width:16px;height:15px;box-sizing:border-box;border:1px solid #fff;border-radius:3px;background:linear-gradient(135deg,#CBDCFE 0%,#C0D3FB 50%,#B2C7F5 100%);"><svg width="14" height="13" viewBox="0 0 14 13" style="position:absolute;left:0;top:0"><path d="M5 2.5 L9 6.5 L5 10.5" fill="none" stroke="#4D6185" stroke-width="2.5" stroke-linejoin="miter"/></svg></div>
<div style="position:absolute;left:787px;top:439px;width:3px;height:15px;border-right:1px solid #86A7E8;border-radius:0 3px 3px 0;box-sizing:border-box"></div><div style="position:absolute;left:773px;top:439px;width:16px;height:15px;box-sizing:border-box;border:1px solid #fff;border-radius:3px;background:linear-gradient(135deg,#CBDCFE 0%,#C0D3FB 50%,#B2C7F5 100%);"><svg width="14" height="13" viewBox="0 0 14 13" style="position:absolute;left:0;top:0"><rect x="3" y="3" width="1" height="6" fill="#EEF4FE"/><rect x="4" y="4" width="1" height="6" fill="#8CB0F8"/><rect x="5" y="3" width="1" height="6" fill="#EEF4FE"/><rect x="6" y="4" width="1" height="6" fill="#8CB0F8"/><rect x="7" y="3" width="1" height="6" fill="#EEF4FE"/><rect x="8" y="4" width="1" height="6" fill="#8CB0F8"/><rect x="9" y="3" width="1" height="6" fill="#EEF4FE"/><rect x="10" y="4" width="1" height="6" fill="#8CB0F8"/></svg></div>
</div></div>
<svg width="0" height="0" style="position:absolute"><defs><linearGradient id="fade" x1="0" y1="0" x2="1" y2="0"><stop offset="0" stop-color="#000"/><stop offset=".55" stop-color="#111"/><stop offset="1" stop-color="#8A877C"/></linearGradient></defs></svg>
<div style="position:absolute;left:6px;top:483px;width:14px;height:8px;box-sizing:border-box;border:1px solid #F4F3EE;border-bottom-color:#D8D4C4;border-radius:3px;background:linear-gradient(#fff,#F2F0E6)"><svg width="14" height="8" viewBox="0 0 14 8" style="position:absolute;left:-1px;top:-1px"><path d="M3 0.6 Q0.6 0.6 0.6 2.6 L0.6 5.4 Q0.6 7.4 3 7.4 M11 0.6 Q13.4 0.6 13.4 2.6 L13.4 5.4 Q13.4 7.4 11 7.4" fill="none" stroke="#0A4A86" stroke-width="1.2"/><rect x="2" y="2" width="10" height="4" fill="#FF0000"/></svg></div>
<div style="position:absolute;left:27px;top:483px;width:14px;height:8px;box-sizing:border-box;border:1px solid #F4F3EE;border-bottom-color:#D8D4C4;border-radius:3px;background:linear-gradient(#fff,#F2F0E6)"><svg width="14" height="8" viewBox="0 0 14 8" style="position:absolute;left:-1px;top:-1px"><path d="M3 0.6 Q0.6 0.6 0.6 2.6 L0.6 5.4 Q0.6 7.4 3 7.4 M11 0.6 Q13.4 0.6 13.4 2.6 L13.4 5.4 Q13.4 7.4 11 7.4" fill="none" stroke="#0A4A86" stroke-width="1.2"/><path d="M2 1.8 L2 6.2 L6 5.2 L11.6 4.4 L11.6 3.6 L6 2.8 Z" fill="url(#fade)"/></svg></div>
<div style="position:absolute;left:48px;top:483px;width:14px;height:8px;box-sizing:border-box;border:1px solid #F4F3EE;border-bottom-color:#D8D4C4;border-radius:3px;background:linear-gradient(#fff,#F2F0E6)"><svg width="14" height="8" viewBox="0 0 14 8" style="position:absolute;left:-1px;top:-1px"><path d="M3 0.6 Q0.6 0.6 0.6 2.6 L0.6 5.4 Q0.6 7.4 3 7.4 M11 0.6 Q13.4 0.6 13.4 2.6 L13.4 5.4 Q13.4 7.4 11 7.4" fill="none" stroke="#0A4A86" stroke-width="1.2"/><path d="M1.8 2 L11.2 2 L8.2 6 L4.8 6 Z" fill="#FF0000"/></svg></div>
<div style="position:absolute;left:6px;top:494px;width:14px;height:8px;box-sizing:border-box;border:1px solid #F4F3EE;border-bottom-color:#D8D4C4;border-radius:3px;background:linear-gradient(#fff,#F2F0E6)"><svg width="14" height="8" viewBox="0 0 14 8" style="position:absolute;left:-1px;top:-1px"><path d="M3 0.6 Q0.6 0.6 0.6 2.6 L0.6 5.4 Q0.6 7.4 3 7.4 M11 0.6 Q13.4 0.6 13.4 2.6 L13.4 5.4 Q13.4 7.4 11 7.4" fill="none" stroke="#0A4A86" stroke-width="1.2"/><path d="M2.8 6 L10.2 6 L7.2 2 L5.8 2 Z" fill="#000"/></svg></div>
<div style="position:absolute;left:27px;top:494px;width:14px;height:8px;box-sizing:border-box;border:1px solid #F4F3EE;border-bottom-color:#D8D4C4;border-radius:3px;background:linear-gradient(#fff,#F2F0E6)"><svg width="14" height="8" viewBox="0 0 14 8" style="position:absolute;left:-1px;top:-1px"><path d="M3 0.6 Q0.6 0.6 0.6 2.6 L0.6 5.4 Q0.6 7.4 3 7.4 M11 0.6 Q13.4 0.6 13.4 2.6 L13.4 5.4 Q13.4 7.4 11 7.4" fill="none" stroke="#0A4A86" stroke-width="1.2"/><path d="M2.2 2 L11.4 2 L7.6 6 L6 6 Z" fill="#000"/></svg></div>
<div style="position:absolute;left:48px;top:494px;width:14px;height:8px;box-sizing:border-box;border:1px solid #F4F3EE;border-bottom-color:#D8D4C4;border-radius:3px;background:linear-gradient(#fff,#F2F0E6)"><svg width="14" height="8" viewBox="0 0 14 8" style="position:absolute;left:-1px;top:-1px"><path d="M3 0.6 Q0.6 0.6 0.6 2.6 L0.6 5.4 Q0.6 7.4 3 7.4 M11 0.6 Q13.4 0.6 13.4 2.6 L13.4 5.4 Q13.4 7.4 11 7.4" fill="none" stroke="#0A4A86" stroke-width="1.2"/><path d="M2.6 5.8 L2.6 2.2 L4.8 2.2 L6.7 3.8 L8.6 2.2 L10.8 2.2 L10.8 5.8 L8.8 5.8 L8.8 4.2 L6.7 5.6 L4.6 4.2 L4.6 5.8 Z" fill="#1A1A14"/></svg></div>
<div style="position:absolute;left:69px;top:482px;width:51px;height:20px;box-sizing:border-box;border:1px solid #003C74;border-radius:3px;background:linear-gradient(#fff 0%,#F6F5F0 70%,#DDDACC 100%);text-align:center;line-height:19px;color:#000;font-size:12px"><span class="s" style="transform:scaleX(0.9324);transform-origin:50% 50%">Abandon</span></div>
<div style="position:absolute;left:0;top:507px;width:1257px;height:1px;background:#F1EADF"></div>
<div style="position:absolute;left:0;top:508px;width:1257px;height:1px;background:#7DA2E4"></div>
<div style="position:absolute;left:165px;top:508px;width:156px;height:1px;background:#F4F7FD"></div>
</body></html>
